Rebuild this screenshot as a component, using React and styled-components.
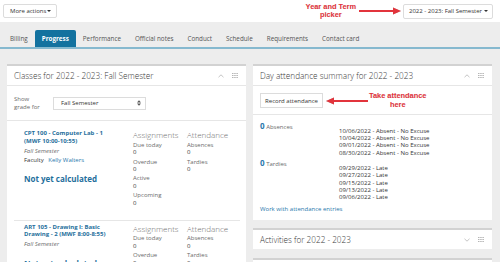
import React from 'react';
import styled, { createGlobalStyle } from 'styled-components';

const colors = {
	page: '#ededed',
	text: '#333333',
	muted: '#6b6b6b',
	border: '#dcdcdc',
	divider: '#e6e6e6',
	blue: '#1f6f9c',
	link: '#2a79ad',
	tab: '#13729f',
	tabLine: '#86b9cf',
	red: '#e2343c',
	icon: '#b5b5b5',
};

const classes = [
	{ id: 1, name: 'CPT 100 - Computer Lab - 1 (MWF 10:00-10:55)', term: 'Fall Semester', faculty: 'Kelly Walters' },
	{ id: 2, name: 'ART 105 - Drawing I: Basic Drawing - 2 (MWF 8:00-8:55)', term: 'Fall Semester' },
];

const assignmentStats = ['Due today', 'Overdue', 'Active', 'Upcoming'];
const attendanceStats = ['Absences', 'Tardies'];

const absences = ['10/06/2022', '10/04/2022', '09/01/2022', '08/30/2022'];
const tardies = ['09/29/2022', '09/27/2022', '09/15/2022', '09/13/2022', '09/06/2022'];

const tabs = ['Billing', 'Progress', 'Performance', 'Official notes', 'Conduct', 'Schedule', 'Requirements', 'Contact card'];

function Arrow({ left }) {
	return (
		<ArrowSvg width="42" height="8" viewBox="0 0 42 8" style={left ? { transform: 'scaleX(-1)' } : undefined}>
			<line x1="0" y1="4" x2="35" y2="4" stroke={colors.red} strokeWidth="1.8" />
			<polygon points="34,0.5 42,4 34,7.5" fill={colors.red} />
		</ArrowSvg>
	);
}

function PanelIcons({ collapsed }) {
	return (
		<IconGroup>
			<svg width="6" height="4" viewBox="0 0 6 4">
				<polyline points={collapsed ? '0.5,0.8 3,3.2 5.5,0.8' : '0.5,3.2 3,0.8 5.5,3.2'} fill="none" stroke={colors.icon} strokeWidth="0.8" />
			</svg>
			<svg width="6" height="5" viewBox="0 0 6 5">
				{[0, 2, 4].map((y) => [0, 2.2, 4.4].map((x) => <rect key={`${x}-${y}`} x={x} y={y} width="1.5" height="1" fill={colors.icon} />))}
			</svg>
		</IconGroup>
	);
}

function ClassItem({ item }) {
	return (
		<ClassRow>
			<ClassInfo>
				<ClassName>{item.name}</ClassName>
				<ClassTerm>{item.term}</ClassTerm>
				{item.faculty && (
					<Faculty>
						Faculty <FacultyLink>{item.faculty}</FacultyLink>
					</Faculty>
				)}
				<Grade>Not yet calculated</Grade>
			</ClassInfo>
			<StatColumn>
				<StatTitle>Assignments</StatTitle>
				{assignmentStats.map((s) => (
					<Stat key={s}>
						<StatLabel>{s}</StatLabel>
						<StatValue>0</StatValue>
					</Stat>
				))}
			</StatColumn>
			<StatColumn>
				<StatTitle>Attendance</StatTitle>
				{attendanceStats.map((s) => (
					<Stat key={s}>
						<StatLabel>{s}</StatLabel>
						<StatValue>0</StatValue>
					</Stat>
				))}
			</StatColumn>
		</ClassRow>
	);
}

export default function App() {
	return (
		<>
			<GlobalStyle />
			<TopBar>
				<DropButton>
					More actions <Caret />
				</DropButton>
				<TopRight>
					<Callout>
						Year and Term
						<br />
						picker
					</Callout>
					<Arrow />
					<TermButton>
						2022 - 2023: Fall Semester <Caret />
					</TermButton>
				</TopRight>
			</TopBar>
			<TabBar>
				{tabs.map((t) => (
					<Tab key={t} $active={t === 'Progress'}>
						{t}
					</Tab>
				))}
			</TabBar>
			<Main>
				<Panel>
					<PanelHeader>
						<PanelTitle>Classes for 2022 - 2023: Fall Semester</PanelTitle>
						<PanelIcons />
					</PanelHeader>
					<FilterRow>
						<FilterLabel>
							Show
							<br />
							grade for
						</FilterLabel>
						<Select>
							Fall Semester
							<svg width="4" height="6" viewBox="0 0 4 6">
								<polygon points="0,2.5 2,0.3 4,2.5" fill="#555" />
								<polygon points="0,3.5 2,5.7 4,3.5" fill="#555" />
							</svg>
						</Select>
					</FilterRow>
					<ClassList>
						{classes.map((c) => (
							<ClassItem key={c.id} item={c} />
						))}
					</ClassList>
				</Panel>
				<Column>
					<Panel>
						<PanelHeader>
							<PanelTitle>Day attendance summary for 2022 - 2023</PanelTitle>
							<PanelIcons />
						</PanelHeader>
						<Toolbar>
							<PlainButton>Record attendance</PlainButton>
							<Arrow left />
							<Callout>
								Take attendance
								<br />
								here
							</Callout>
						</Toolbar>
						<Summary>
							<SummaryLine>
								<Count>0</Count> Absences
							</SummaryLine>
							<EntryList>
								{absences.map((d) => (
									<li key={d}>{d} - Absent - No Excuse</li>
								))}
							</EntryList>
							<SummaryLine $spaced>
								<Count>0</Count> Tardies
							</SummaryLine>
							<EntryList>
								{tardies.map((d) => (
									<li key={d}>{d} - Late</li>
								))}
							</EntryList>
							<Link>Work with attendance entries</Link>
						</Summary>
					</Panel>
					<Panel>
						<PanelHeader $collapsed>
							<PanelTitle>Activities for 2022 - 2023</PanelTitle>
							<PanelIcons collapsed />
						</PanelHeader>
					</Panel>
					<Panel>
						<PanelHeader $collapsed />
					</Panel>
				</Column>
			</Main>
		</>
	);
}

const GlobalStyle = createGlobalStyle`
	* { box-sizing: border-box; }
	html, body {
		margin: 0;
		padding: 0;
		background: ${colors.page};
	}
	body {
		width: 500px;
		height: 262px;
		overflow: hidden;
		font-family: "Open Sans", "Liberation Sans", sans-serif;
		color: ${colors.text};
	}
`;

const TopBar = styled.div`
	height: 22px;
	background: #fff;
	display: flex;
	align-items: center;
	justify-content: space-between;
	padding: 0 7px 0 3px;
`;

const DropButton = styled.div`
	height: 14px;
	width: 54px;
	display: flex;
	align-items: center;
	justify-content: space-between;
	padding: 0 5px 0 6px;
	border: 1px solid ${colors.border};
	border-radius: 2px;
	font-size: 6px;
	white-space: nowrap;
	color: ${colors.text};
`;

const TermButton = styled(DropButton)`
	height: 15px;
	width: 90px;
	margin-left: 1px;
	padding: 0 4px 0 5px;
`;

const Caret = styled.span`
	flex: none;
	width: 0;
	height: 0;
	border-left: 2px solid transparent;
	border-right: 2px solid transparent;
	border-top: 2.5px solid #333;
`;

const TopRight = styled.div`
	display: flex;
	align-items: center;
`;

const Callout = styled.div`
	font-family: "Liberation Sans", Arial, sans-serif;
	font-weight: bold;
	font-size: 7.4px;
	line-height: 8.5px;
	color: ${colors.red};
	text-align: center;
	white-space: nowrap;
	text-shadow: 0.4px 0.4px 0.6px rgba(0, 0, 0, 0.15);
`;

const ArrowSvg = styled.svg`
	display: block;
	flex: none;
	margin: 0 1px 0 3px;
	filter: drop-shadow(0.5px 0.6px 0.5px rgba(0, 0, 0, 0.3));
`;

const TabBar = styled.div`
	height: 27px;
	display: flex;
	align-items: flex-end;
	padding-left: 3px;
	border-bottom: 2px solid ${colors.tabLine};
`;

const Tab = styled.div`
	height: 17px;
	line-height: 17px;
	padding: 0 7px;
	font-size: 6.3px;
	color: ${(p) => (p.$active ? '#fff' : '#555')};
	font-weight: ${(p) => (p.$active ? 700 : 400)};
	background: ${(p) => (p.$active ? colors.tab : 'transparent')};
	border-radius: 2px 2px 0 0;
`;

const Main = styled.div`
	display: grid;
	grid-template-columns: 239px 239px;
	column-gap: 7px;
	padding: 15px 8px 0 7px;
	align-items: start;
`;

const Column = styled.div`
	display: flex;
	flex-direction: column;
	gap: 8.5px;
`;

const Panel = styled.section`
	background: #fff;
	border-top: 2px solid #d2d2d2;
`;

const PanelHeader = styled.header`
	height: ${(p) => (p.$collapsed ? '19px' : '20px')};
	display: flex;
	align-items: center;
	justify-content: space-between;
	padding: 0 8px 0 7px;
	border-bottom: ${(p) => (p.$collapsed ? 'none' : `1px solid ${colors.divider}`)};
`;

const PanelTitle = styled.h2`
	margin: 0;
	font-size: 8.2px;
	font-weight: 300;
	color: #3a3a3a;
`;

const IconGroup = styled.div`
	display: flex;
	align-items: center;
	gap: 8px;
`;

const FilterRow = styled.div`
	display: flex;
	align-items: center;
	padding: 9px 7px;
	border-bottom: 1px solid ${colors.divider};
`;

const FilterLabel = styled.div`
	width: 39px;
	font-size: 6px;
	line-height: 8px;
	color: ${colors.muted};
`;

const Select = styled.div`
	width: 93px;
	height: 13px;
	display: flex;
	align-items: center;
	justify-content: space-between;
	padding: 0 4px 0 7px;
	border: 1px solid ${colors.border};
	font-size: 6px;
	color: ${colors.text};
`;

const ClassList = styled.div`
	padding: 6px 6px 0 7px;
`;

const ClassRow = styled.div`
	display: grid;
	grid-template-columns: 109px 54px 1fr;
	padding: 3px 0 12.5px 10px;

	& + & {
		border-top: 1px solid ${colors.divider};
	}
`;

const ClassInfo = styled.div`
	font-size: 6px;
	line-height: 7.5px;
`;

const ClassName = styled.div`
	max-width: 97px;
	font-weight: 700;
	color: ${colors.blue};
`;

const ClassTerm = styled.div`
	margin-top: 2.5px;
	font-style: italic;
	color: ${colors.muted};
`;

const Faculty = styled.div`
	margin-top: 1.5px;
	color: ${colors.text};
`;

const FacultyLink = styled.span`
	margin-left: 3px;
	color: ${colors.link};
`;

const Grade = styled.div`
	margin-top: 10px;
	font-size: 8px;
	line-height: 10px;
	font-weight: 700;
	color: ${colors.blue};
`;

const StatColumn = styled.div`
	font-size: 6px;
	line-height: 7.5px;
`;

const StatTitle = styled.div`
	font-size: 8px;
	line-height: 10px;
	font-weight: 300;
	color: #6f6f6f;
`;

const Stat = styled.div`
	margin-top: 1.75px;
`;

const StatLabel = styled.div`
	color: ${colors.muted};
`;

const StatValue = styled.div`
	color: ${colors.text};
`;

const Toolbar = styled.div`
	display: flex;
	align-items: center;
	padding: 6px 7px 5px;
	border-bottom: 1px solid ${colors.divider};
`;

const PlainButton = styled.div`
	height: 15px;
	width: 63px;
	display: flex;
	align-items: center;
	justify-content: center;
	border: 1px solid ${colors.border};
	font-size: 6px;
	white-space: nowrap;
	color: ${colors.text};
`;

const Summary = styled.div`
	padding: 7px 7px 6.5px;
	font-size: 6px;
`;

const SummaryLine = styled.div`
	line-height: 8px;
	color: ${colors.muted};
	margin-top: ${(p) => (p.$spaced ? '2.2px' : '0')};
`;

const Count = styled.span`
	font-size: 8px;
	font-weight: 700;
	color: ${colors.link};
`;

const EntryList = styled.ul`
	list-style: none;
	margin: -3.3px 0 0 79px;
	padding: 0;
	line-height: 7.33px;
	color: ${colors.text};
`;

const Link = styled.div`
	margin-top: 4px;
	line-height: 7.5px;
	color: ${colors.link};
`;
